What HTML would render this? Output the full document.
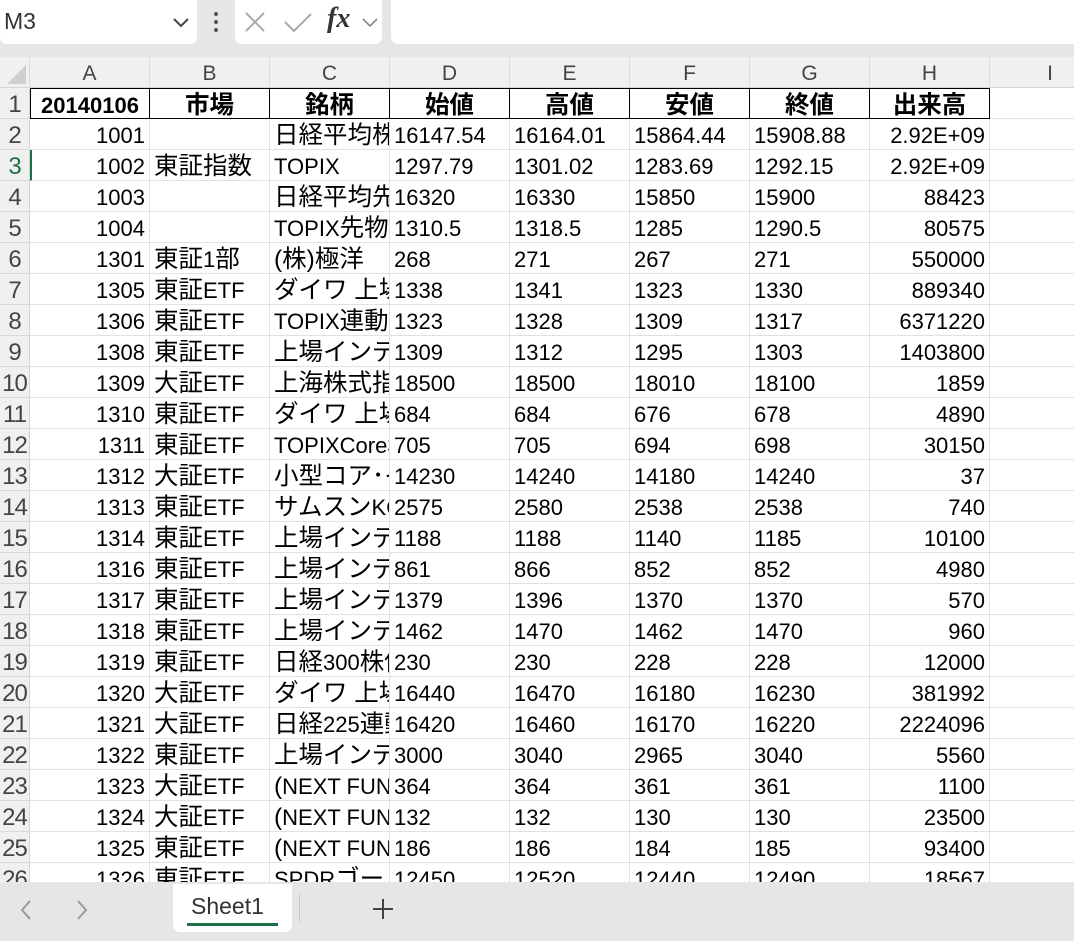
<!DOCTYPE html>
<html><head><meta charset="utf-8">
<style>
*{margin:0;padding:0;box-sizing:border-box}
body{width:1074px;height:941px;overflow:hidden;background:#fff;font-family:"Liberation Sans","Noto Sans CJK JP",sans-serif;position:relative}
.top{position:absolute;left:0;top:0;width:1074px;height:57px;background:#e6e6e6}
.box{position:absolute;top:0;height:44px;background:#fff;border-radius:0 0 7px 7px}
.colh{position:absolute;top:57px;left:0;width:1074px;height:31px;background:#f0f0f0;border-bottom:1px solid #d4d4d4}
.colh div{position:absolute;top:0;height:31px;line-height:34px;text-align:center;font-size:21px;color:#444;border-right:1px solid #dadada}
.row{position:absolute;left:0;height:31px;width:1074px}
.row div{position:absolute;top:0;height:31px;line-height:34px;font-size:22px;white-space:nowrap;overflow:hidden;border-right:1px solid #e1e1e1;border-bottom:1px solid #e1e1e1;color:#000;padding:0 4px}
.row .rh{left:0;width:30px;background:#f0f0f0;color:#444;text-align:center;padding:0;border-right:1px solid #d4d4d4;border-bottom:1px solid #dadada;font-size:24px;letter-spacing:-1px}
i{font-style:normal;font-size:24.5px;line-height:20px}
.r{text-align:right}
.b{font-weight:bold;text-align:center;border:1px solid #000 !important;border-left:none !important}
.tabbar{position:absolute;left:0;top:882px;width:1074px;height:59px;background:#e6e6e6}
</style></head><body>
<div class="top">
<div class="box" style="left:0;width:197px"><span style="position:absolute;left:4px;top:8px;font-size:23px;color:#333">M3</span>
<svg style="position:absolute;left:172px;top:16px" width="18" height="12"><path d="M2 3 L9 10 L16 3" fill="none" stroke="#444" stroke-width="2"/></svg></div>
<svg style="position:absolute;left:212px;top:11px" width="8" height="22"><circle cx="4" cy="3" r="2" fill="#555"/><circle cx="4" cy="11" r="2" fill="#555"/><circle cx="4" cy="19" r="2" fill="#555"/></svg>
<div class="box" style="left:235px;width:147px">
<svg style="position:absolute;left:8px;top:10px" width="24" height="24"><path d="M3 3 L21 21 M21 3 L3 21" stroke="#aaa" stroke-width="2"/></svg>
<svg style="position:absolute;left:48px;top:10px" width="30" height="24"><path d="M2 12 L11 21 L28 4" fill="none" stroke="#aaa" stroke-width="2"/></svg>
<span style="position:absolute;left:92px;top:3px;font-family:'Liberation Serif',serif;font-style:italic;font-weight:bold;font-size:28px;color:#333">fx</span>
<svg style="position:absolute;left:126px;top:16px" width="18" height="12"><path d="M2 3 L9 10 L16 3" fill="none" stroke="#888" stroke-width="1.6"/></svg></div>
<div class="box" style="left:391px;width:690px"></div>
</div>
<div class="colh">
<div style="left:0;width:30px"><svg width="30" height="31"><path d="M26 8 L26 27 L7 27 Z" fill="#cfcfcf"/></svg></div>
<div style="left:30px;width:120px">A</div><div style="left:150px;width:120px">B</div><div style="left:270px;width:120px">C</div><div style="left:390px;width:120px">D</div><div style="left:510px;width:120px">E</div><div style="left:630px;width:120px">F</div><div style="left:750px;width:120px">G</div><div style="left:870px;width:120px">H</div><div style="left:990px;width:120px;border:none">I</div>
</div>
<div id="grid">
<div class="row" style="top:88px"><div class="rh">1</div><div class="b" style="left:30px;width:120px;border-left:1px solid #000 !important">20140106</div><div class="b" style="left:150px;width:120px"><i>市場</i></div><div class="b" style="left:270px;width:120px"><i>銘柄</i></div><div class="b" style="left:390px;width:120px"><i>始値</i></div><div class="b" style="left:510px;width:120px"><i>高値</i></div><div class="b" style="left:630px;width:120px"><i>安値</i></div><div class="b" style="left:750px;width:120px"><i>終値</i></div><div class="b" style="left:870px;width:120px"><i>出来高</i></div><div style="left:990px;width:120px"></div></div>
<div class="row" style="top:119px"><div class="rh">2</div><div class="r" style="left:30px;width:120px">1001</div><div style="left:150px;width:120px"></div><div style="left:270px;width:120px"><i>日経平均株価</i></div><div style="left:390px;width:120px">16147.54</div><div style="left:510px;width:120px">16164.01</div><div style="left:630px;width:120px">15864.44</div><div style="left:750px;width:120px">15908.88</div><div class="r" style="left:870px;width:120px">2.92E+09</div><div style="left:990px;width:120px"></div></div>
<div class="row" style="top:150px"><div class="rh" style="color:#1e7145">3</div><div class="r" style="left:30px;width:120px;border-left:2px solid #1e7145">1002</div><div style="left:150px;width:120px"><i>東証指数</i></div><div style="left:270px;width:120px">TOPIX</div><div style="left:390px;width:120px">1297.79</div><div style="left:510px;width:120px">1301.02</div><div style="left:630px;width:120px">1283.69</div><div style="left:750px;width:120px">1292.15</div><div class="r" style="left:870px;width:120px">2.92E+09</div><div style="left:990px;width:120px"></div></div>
<div class="row" style="top:181px"><div class="rh">4</div><div class="r" style="left:30px;width:120px">1003</div><div style="left:150px;width:120px"></div><div style="left:270px;width:120px"><i>日経平均先物</i></div><div style="left:390px;width:120px">16320</div><div style="left:510px;width:120px">16330</div><div style="left:630px;width:120px">15850</div><div style="left:750px;width:120px">15900</div><div class="r" style="left:870px;width:120px">88423</div><div style="left:990px;width:120px"></div></div>
<div class="row" style="top:212px"><div class="rh">5</div><div class="r" style="left:30px;width:120px">1004</div><div style="left:150px;width:120px"></div><div style="left:270px;width:120px">TOPIX<i>先物</i></div><div style="left:390px;width:120px">1310.5</div><div style="left:510px;width:120px">1318.5</div><div style="left:630px;width:120px">1285</div><div style="left:750px;width:120px">1290.5</div><div class="r" style="left:870px;width:120px">80575</div><div style="left:990px;width:120px"></div></div>
<div class="row" style="top:243px"><div class="rh">6</div><div class="r" style="left:30px;width:120px">1301</div><div style="left:150px;width:120px"><i>東証</i>1<i>部</i></div><div style="left:270px;width:120px"><i>(株)極洋</i></div><div style="left:390px;width:120px">268</div><div style="left:510px;width:120px">271</div><div style="left:630px;width:120px">267</div><div style="left:750px;width:120px">271</div><div class="r" style="left:870px;width:120px">550000</div><div style="left:990px;width:120px"></div></div>
<div class="row" style="top:274px"><div class="rh">7</div><div class="r" style="left:30px;width:120px">1305</div><div style="left:150px;width:120px"><i>東証</i>ETF</div><div style="left:270px;width:120px"><i>ダイワ 上場</i></div><div style="left:390px;width:120px">1338</div><div style="left:510px;width:120px">1341</div><div style="left:630px;width:120px">1323</div><div style="left:750px;width:120px">1330</div><div class="r" style="left:870px;width:120px">889340</div><div style="left:990px;width:120px"></div></div>
<div class="row" style="top:305px"><div class="rh">8</div><div class="r" style="left:30px;width:120px">1306</div><div style="left:150px;width:120px"><i>東証</i>ETF</div><div style="left:270px;width:120px">TOPIX<i>連動</i></div><div style="left:390px;width:120px">1323</div><div style="left:510px;width:120px">1328</div><div style="left:630px;width:120px">1309</div><div style="left:750px;width:120px">1317</div><div class="r" style="left:870px;width:120px">6371220</div><div style="left:990px;width:120px"></div></div>
<div class="row" style="top:336px"><div class="rh">9</div><div class="r" style="left:30px;width:120px">1308</div><div style="left:150px;width:120px"><i>東証</i>ETF</div><div style="left:270px;width:120px"><i>上場インデックス</i></div><div style="left:390px;width:120px">1309</div><div style="left:510px;width:120px">1312</div><div style="left:630px;width:120px">1295</div><div style="left:750px;width:120px">1303</div><div class="r" style="left:870px;width:120px">1403800</div><div style="left:990px;width:120px"></div></div>
<div class="row" style="top:367px"><div class="rh">10</div><div class="r" style="left:30px;width:120px">1309</div><div style="left:150px;width:120px"><i>大証</i>ETF</div><div style="left:270px;width:120px"><i>上海株式指数</i></div><div style="left:390px;width:120px">18500</div><div style="left:510px;width:120px">18500</div><div style="left:630px;width:120px">18010</div><div style="left:750px;width:120px">18100</div><div class="r" style="left:870px;width:120px">1859</div><div style="left:990px;width:120px"></div></div>
<div class="row" style="top:398px"><div class="rh">11</div><div class="r" style="left:30px;width:120px">1310</div><div style="left:150px;width:120px"><i>東証</i>ETF</div><div style="left:270px;width:120px"><i>ダイワ 上場</i></div><div style="left:390px;width:120px">684</div><div style="left:510px;width:120px">684</div><div style="left:630px;width:120px">676</div><div style="left:750px;width:120px">678</div><div class="r" style="left:870px;width:120px">4890</div><div style="left:990px;width:120px"></div></div>
<div class="row" style="top:429px"><div class="rh">12</div><div class="r" style="left:30px;width:120px">1311</div><div style="left:150px;width:120px"><i>東証</i>ETF</div><div style="left:270px;width:120px">TOPIXCore30</div><div style="left:390px;width:120px">705</div><div style="left:510px;width:120px">705</div><div style="left:630px;width:120px">694</div><div style="left:750px;width:120px">698</div><div class="r" style="left:870px;width:120px">30150</div><div style="left:990px;width:120px"></div></div>
<div class="row" style="top:460px"><div class="rh">13</div><div class="r" style="left:30px;width:120px">1312</div><div style="left:150px;width:120px"><i>大証</i>ETF</div><div style="left:270px;width:120px"><i>小型コア･インデックス</i></div><div style="left:390px;width:120px">14230</div><div style="left:510px;width:120px">14240</div><div style="left:630px;width:120px">14180</div><div style="left:750px;width:120px">14240</div><div class="r" style="left:870px;width:120px">37</div><div style="left:990px;width:120px"></div></div>
<div class="row" style="top:491px"><div class="rh">14</div><div class="r" style="left:30px;width:120px">1313</div><div style="left:150px;width:120px"><i>東証</i>ETF</div><div style="left:270px;width:120px"><i>サムスン</i>KODEX</div><div style="left:390px;width:120px">2575</div><div style="left:510px;width:120px">2580</div><div style="left:630px;width:120px">2538</div><div style="left:750px;width:120px">2538</div><div class="r" style="left:870px;width:120px">740</div><div style="left:990px;width:120px"></div></div>
<div class="row" style="top:522px"><div class="rh">15</div><div class="r" style="left:30px;width:120px">1314</div><div style="left:150px;width:120px"><i>東証</i>ETF</div><div style="left:270px;width:120px"><i>上場インデックス</i></div><div style="left:390px;width:120px">1188</div><div style="left:510px;width:120px">1188</div><div style="left:630px;width:120px">1140</div><div style="left:750px;width:120px">1185</div><div class="r" style="left:870px;width:120px">10100</div><div style="left:990px;width:120px"></div></div>
<div class="row" style="top:553px"><div class="rh">16</div><div class="r" style="left:30px;width:120px">1316</div><div style="left:150px;width:120px"><i>東証</i>ETF</div><div style="left:270px;width:120px"><i>上場インデックス</i></div><div style="left:390px;width:120px">861</div><div style="left:510px;width:120px">866</div><div style="left:630px;width:120px">852</div><div style="left:750px;width:120px">852</div><div class="r" style="left:870px;width:120px">4980</div><div style="left:990px;width:120px"></div></div>
<div class="row" style="top:584px"><div class="rh">17</div><div class="r" style="left:30px;width:120px">1317</div><div style="left:150px;width:120px"><i>東証</i>ETF</div><div style="left:270px;width:120px"><i>上場インデックス</i></div><div style="left:390px;width:120px">1379</div><div style="left:510px;width:120px">1396</div><div style="left:630px;width:120px">1370</div><div style="left:750px;width:120px">1370</div><div class="r" style="left:870px;width:120px">570</div><div style="left:990px;width:120px"></div></div>
<div class="row" style="top:615px"><div class="rh">18</div><div class="r" style="left:30px;width:120px">1318</div><div style="left:150px;width:120px"><i>東証</i>ETF</div><div style="left:270px;width:120px"><i>上場インデックス</i></div><div style="left:390px;width:120px">1462</div><div style="left:510px;width:120px">1470</div><div style="left:630px;width:120px">1462</div><div style="left:750px;width:120px">1470</div><div class="r" style="left:870px;width:120px">960</div><div style="left:990px;width:120px"></div></div>
<div class="row" style="top:646px"><div class="rh">19</div><div class="r" style="left:30px;width:120px">1319</div><div style="left:150px;width:120px"><i>東証</i>ETF</div><div style="left:270px;width:120px"><i>日経</i>300<i>株価</i></div><div style="left:390px;width:120px">230</div><div style="left:510px;width:120px">230</div><div style="left:630px;width:120px">228</div><div style="left:750px;width:120px">228</div><div class="r" style="left:870px;width:120px">12000</div><div style="left:990px;width:120px"></div></div>
<div class="row" style="top:677px"><div class="rh">20</div><div class="r" style="left:30px;width:120px">1320</div><div style="left:150px;width:120px"><i>大証</i>ETF</div><div style="left:270px;width:120px"><i>ダイワ 上場</i></div><div style="left:390px;width:120px">16440</div><div style="left:510px;width:120px">16470</div><div style="left:630px;width:120px">16180</div><div style="left:750px;width:120px">16230</div><div class="r" style="left:870px;width:120px">381992</div><div style="left:990px;width:120px"></div></div>
<div class="row" style="top:708px"><div class="rh">21</div><div class="r" style="left:30px;width:120px">1321</div><div style="left:150px;width:120px"><i>大証</i>ETF</div><div style="left:270px;width:120px"><i>日経</i>225<i>連動</i></div><div style="left:390px;width:120px">16420</div><div style="left:510px;width:120px">16460</div><div style="left:630px;width:120px">16170</div><div style="left:750px;width:120px">16220</div><div class="r" style="left:870px;width:120px">2224096</div><div style="left:990px;width:120px"></div></div>
<div class="row" style="top:739px"><div class="rh">22</div><div class="r" style="left:30px;width:120px">1322</div><div style="left:150px;width:120px"><i>東証</i>ETF</div><div style="left:270px;width:120px"><i>上場インデックス</i></div><div style="left:390px;width:120px">3000</div><div style="left:510px;width:120px">3040</div><div style="left:630px;width:120px">2965</div><div style="left:750px;width:120px">3040</div><div class="r" style="left:870px;width:120px">5560</div><div style="left:990px;width:120px"></div></div>
<div class="row" style="top:770px"><div class="rh">23</div><div class="r" style="left:30px;width:120px">1323</div><div style="left:150px;width:120px"><i>大証</i>ETF</div><div style="left:270px;width:120px"><i>(</i>NEXT FUNDS)</div><div style="left:390px;width:120px">364</div><div style="left:510px;width:120px">364</div><div style="left:630px;width:120px">361</div><div style="left:750px;width:120px">361</div><div class="r" style="left:870px;width:120px">1100</div><div style="left:990px;width:120px"></div></div>
<div class="row" style="top:801px"><div class="rh">24</div><div class="r" style="left:30px;width:120px">1324</div><div style="left:150px;width:120px"><i>大証</i>ETF</div><div style="left:270px;width:120px"><i>(</i>NEXT FUNDS)</div><div style="left:390px;width:120px">132</div><div style="left:510px;width:120px">132</div><div style="left:630px;width:120px">130</div><div style="left:750px;width:120px">130</div><div class="r" style="left:870px;width:120px">23500</div><div style="left:990px;width:120px"></div></div>
<div class="row" style="top:832px"><div class="rh">25</div><div class="r" style="left:30px;width:120px">1325</div><div style="left:150px;width:120px"><i>東証</i>ETF</div><div style="left:270px;width:120px"><i>(</i>NEXT FUNDS)</div><div style="left:390px;width:120px">186</div><div style="left:510px;width:120px">186</div><div style="left:630px;width:120px">184</div><div style="left:750px;width:120px">185</div><div class="r" style="left:870px;width:120px">93400</div><div style="left:990px;width:120px"></div></div>
<div class="row" style="top:863px"><div class="rh">26</div><div class="r" style="left:30px;width:120px">1326</div><div style="left:150px;width:120px"><i>東証</i>ETF</div><div style="left:270px;width:120px">SPDR<i>ゴールド</i></div><div style="left:390px;width:120px">12450</div><div style="left:510px;width:120px">12520</div><div style="left:630px;width:120px">12440</div><div style="left:750px;width:120px">12490</div><div class="r" style="left:870px;width:120px">18567</div><div style="left:990px;width:120px"></div></div>
</div>
<div class="tabbar">
<svg style="position:absolute;left:18px;top:16px" width="16" height="24"><path d="M12 3 L4 12 L12 21" fill="none" stroke="#999" stroke-width="2"/></svg>
<svg style="position:absolute;left:74px;top:16px" width="16" height="24"><path d="M4 3 L12 12 L4 21" fill="none" stroke="#999" stroke-width="2"/></svg>
<div style="position:absolute;left:173px;top:2px;width:119px;height:48px;background:#fff;border-radius:0 0 7px 7px">
<span style="position:absolute;left:18px;top:9px;font-size:23px;color:#333">Sheet1</span>
<div style="position:absolute;left:14px;top:39px;width:91px;height:3px;background:#1e7145"></div></div>
<div style="position:absolute;left:299px;top:12px;width:1px;height:28px;background:#c8c8c8"></div>
<svg style="position:absolute;left:372px;top:16px" width="22" height="22"><path d="M11 1 V21 M1 11 H21" stroke="#444" stroke-width="2"/></svg>
</div>
</body></html>
